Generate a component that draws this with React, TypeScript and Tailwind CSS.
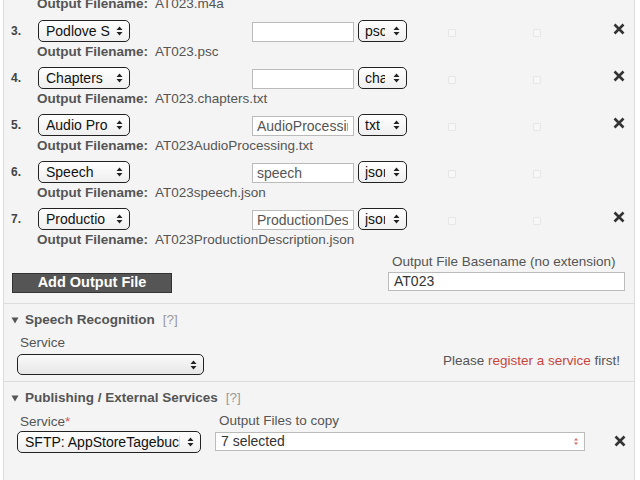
import React from "react";

function Arrows({ color = "#222" }: { color?: string }) {
  return (
    <svg width="7" height="10" viewBox="0 0 7 10" className="shrink-0">
      <path d="M3.5 0.5 L6.5 4 H0.5 Z M3.5 9.5 L6.5 6 H0.5 Z" fill={color} />
    </svg>
  );
}

function Select({
  box,
  text,
  textBox,
}: {
  box: string;
  text: string;
  textBox: string;
}) {
  return (
    <div
      className={`flex items-center shrink-0 rounded-[5px] border border-[#222] bg-gradient-to-b from-white to-[#efefef] pl-[7px] pr-[6px] ${box}`}
    >
      <span className={`overflow-hidden whitespace-nowrap text-[14px] text-[#111] ${textBox}`}>
        {text}
      </span>
      <div className="flex-1" />
      <Arrows />
    </div>
  );
}

function TextBox({ value }: { value: string }) {
  return (
    <div className="flex items-center shrink-0 w-[102px] h-[20px] mt-[1px] border border-[#bbb] bg-white pl-[4px] pr-[5px]">
      <div className="overflow-hidden w-full">
        <span className="whitespace-nowrap text-[14px] text-[#555]">{value}</span>
      </div>
    </div>
  );
}

function XIcon() {
  return (
    <svg width="12" height="12" viewBox="0 0 12 12" className="shrink-0">
      <path d="M1.5 1.5 L10.5 10.5 M10.5 1.5 L1.5 10.5" stroke="#333" strokeWidth="2.6" strokeLinecap="butt" />
    </svg>
  );
}

function Check() {
  return <div className="w-[8px] h-[8px] shrink-0 mt-[4px] rounded-[1px] border border-[#e6e6e6] bg-[#f7f7f7]" />;
}

function FileLine({ value }: { value: string }) {
  return (
    <div className="h-[16px] flex items-center pl-[33px] text-[13.5px] leading-[16px] text-[#555] whitespace-nowrap">
      <span className="font-bold">Output Filename:</span>
      <span className="ml-[7px]">{value}</span>
    </div>
  );
}

type Row = {
  n: string;
  sel: string;
  input: string;
  ext: string;
  file: string;
  x: boolean;
};

const rows: Row[] = [
  { n: "3.", sel: "Podlove S", input: "", ext: "psc", file: "AT023.psc", x: true },
  { n: "4.", sel: "Chapters", input: "", ext: "chapters", file: "AT023.chapters.txt", x: true },
  { n: "5.", sel: "Audio Pro", input: "AudioProcessing", ext: "txt", file: "AT023AudioProcessing.txt", x: true },
  { n: "6.", sel: "Speech", input: "speech", ext: "json", file: "AT023speech.json", x: false },
  { n: "7.", sel: "Productio", input: "ProductionDescription", ext: "json", file: "AT023ProductionDescription.json", x: true },
];

function OutputRow({ r }: { r: Row }) {
  return (
    <div className="mt-[7px] first:mt-[8px]">
      <div className="flex items-center h-[22px]">
        <span className="w-[34px] shrink-0 pl-[7px] text-[12px] font-bold text-[#444]">{r.n}</span>
        <Select box="w-[92px] h-[22px]" text={r.sel} textBox="w-[66px]" />
        <div className="w-[122px] shrink-0" />
        <TextBox value={r.input} />
        <div className="w-[4px] shrink-0" />
        <Select box="w-[49px] h-[22px] !pl-[6px]" text={r.ext} textBox="w-[20px]" />
        <div className="w-[41px] shrink-0" />
        <Check />
        <div className="w-[77px] shrink-0" />
        <Check />
        <div className="w-[72px] shrink-0" />
        {r.x ? <div className="-mt-[4px]"><XIcon /></div> : null}
      </div>
      <div className="mt-[2px]">
        <FileLine value={r.file} />
      </div>
    </div>
  );
}

function SectionHeader({ title }: { title: string }) {
  return (
    <div className="flex items-center h-[17px] pl-[7px] text-[13.5px] text-[#555]">
      <svg width="8" height="7" viewBox="0 0 8 7" className="shrink-0">
        <path d="M0.5 0.5 H7.5 L4 6.5 Z" fill="#555" />
      </svg>
      <span className="ml-[6px] font-bold">{title}</span>
      <span className="ml-[8px] text-[#999]">[?]</span>
    </div>
  );
}

export default function App() {
  return (
    <div className="w-[640px] h-[480px] overflow-hidden bg-white font-['Liberation_Sans',Arial,sans-serif]">
      <div className="ml-[3px] w-[632px] min-h-[490px] border-x border-[#dcdcdc] bg-[#f4f4f4]">
        {/* Outputs */}
        <div className="pb-[10px] border-b border-[#dcdcdc]">
          <div className="-mt-[4px]">
            <FileLine value="AT023.m4a" />
          </div>
          <div className="flex flex-col">
            {rows.map((r) => (
              <OutputRow key={r.n} r={r} />
            ))}
          </div>
          <div className="flex items-end mt-[6px]">
            <div className="ml-[8px] w-[160px] h-[20px] flex items-center justify-center bg-[#555] border border-[#333] text-white text-[14.5px] font-bold">
              Add Output File
            </div>
            <div className="ml-[216px] flex flex-col">
              <div className="pl-[4px] h-[16px] leading-[16px] text-[13.5px] text-[#555] whitespace-nowrap">
                Output File Basename (no extension)
              </div>
              <div className="mt-[2px] mb-[2px] w-[237px] h-[19px] flex items-center pl-[5px] border border-[#bbb] bg-white text-[14px] text-[#333]">
                AT023
              </div>
            </div>
          </div>
        </div>

        {/* Speech Recognition */}
        <div className="pt-[8px] pb-[6px] border-b border-[#dcdcdc]">
          <SectionHeader title="Speech Recognition" />
          <div className="mt-[6px] pl-[16px] h-[16px] leading-[16px] text-[13.5px] text-[#555]">Service</div>
          <div className="flex items-start mt-[3px] pr-[14px]">
            <div className="ml-[13px]">
              <Select box="w-[187px] h-[21px] !from-[#fafafa] !to-[#e6e6e6]" text="" textBox="w-[10px]" />
            </div>
            <div className="flex-1" />
            <div className="-mt-[1px] h-[16px] leading-[16px] text-[13.5px] text-[#555] whitespace-nowrap">
              Please <span className="text-[#c9463d]">register a service</span> first!
            </div>
          </div>
        </div>

        {/* Publishing */}
        <div className="pt-[8px]">
          <SectionHeader title="Publishing / External Services" />
          <div className="flex items-end mt-[6px]">
            <div className="ml-[13px] flex flex-col">
              <div className="pl-[3px] h-[16px] leading-[16px] text-[13.5px] text-[#555]">
                Service<span className="text-[#d9534f]">*</span>
              </div>
              <div className="mt-[1px]">
                <Select box="w-[184px] h-[22px]" text="SFTP: AppStoreTagebuch" textBox="w-[155px]" />
              </div>
            </div>
            <div className="ml-[14px] flex flex-col">
              <div className="pl-[4px] h-[16px] leading-[16px] text-[13.5px] text-[#555]">Output Files to copy</div>
              <div className="mt-[3px] mb-[2px] w-[370px] h-[19px] flex items-center pl-[5px] pr-[6px] border border-[#bbb] bg-white text-[14px] text-[#333]">
                <span>7 selected</span>
                <div className="flex-1" />
                <svg width="4" height="7" viewBox="0 0 4 7">
                  <path d="M2 0 L4 2.6 H0 Z M2 7 L4 4.4 H0 Z" fill="#d66" />
                </svg>
              </div>
            </div>
            <div className="ml-[29px] mb-[6px]">
              <XIcon />
            </div>
          </div>
        </div>
      </div>
    </div>
  );
}
